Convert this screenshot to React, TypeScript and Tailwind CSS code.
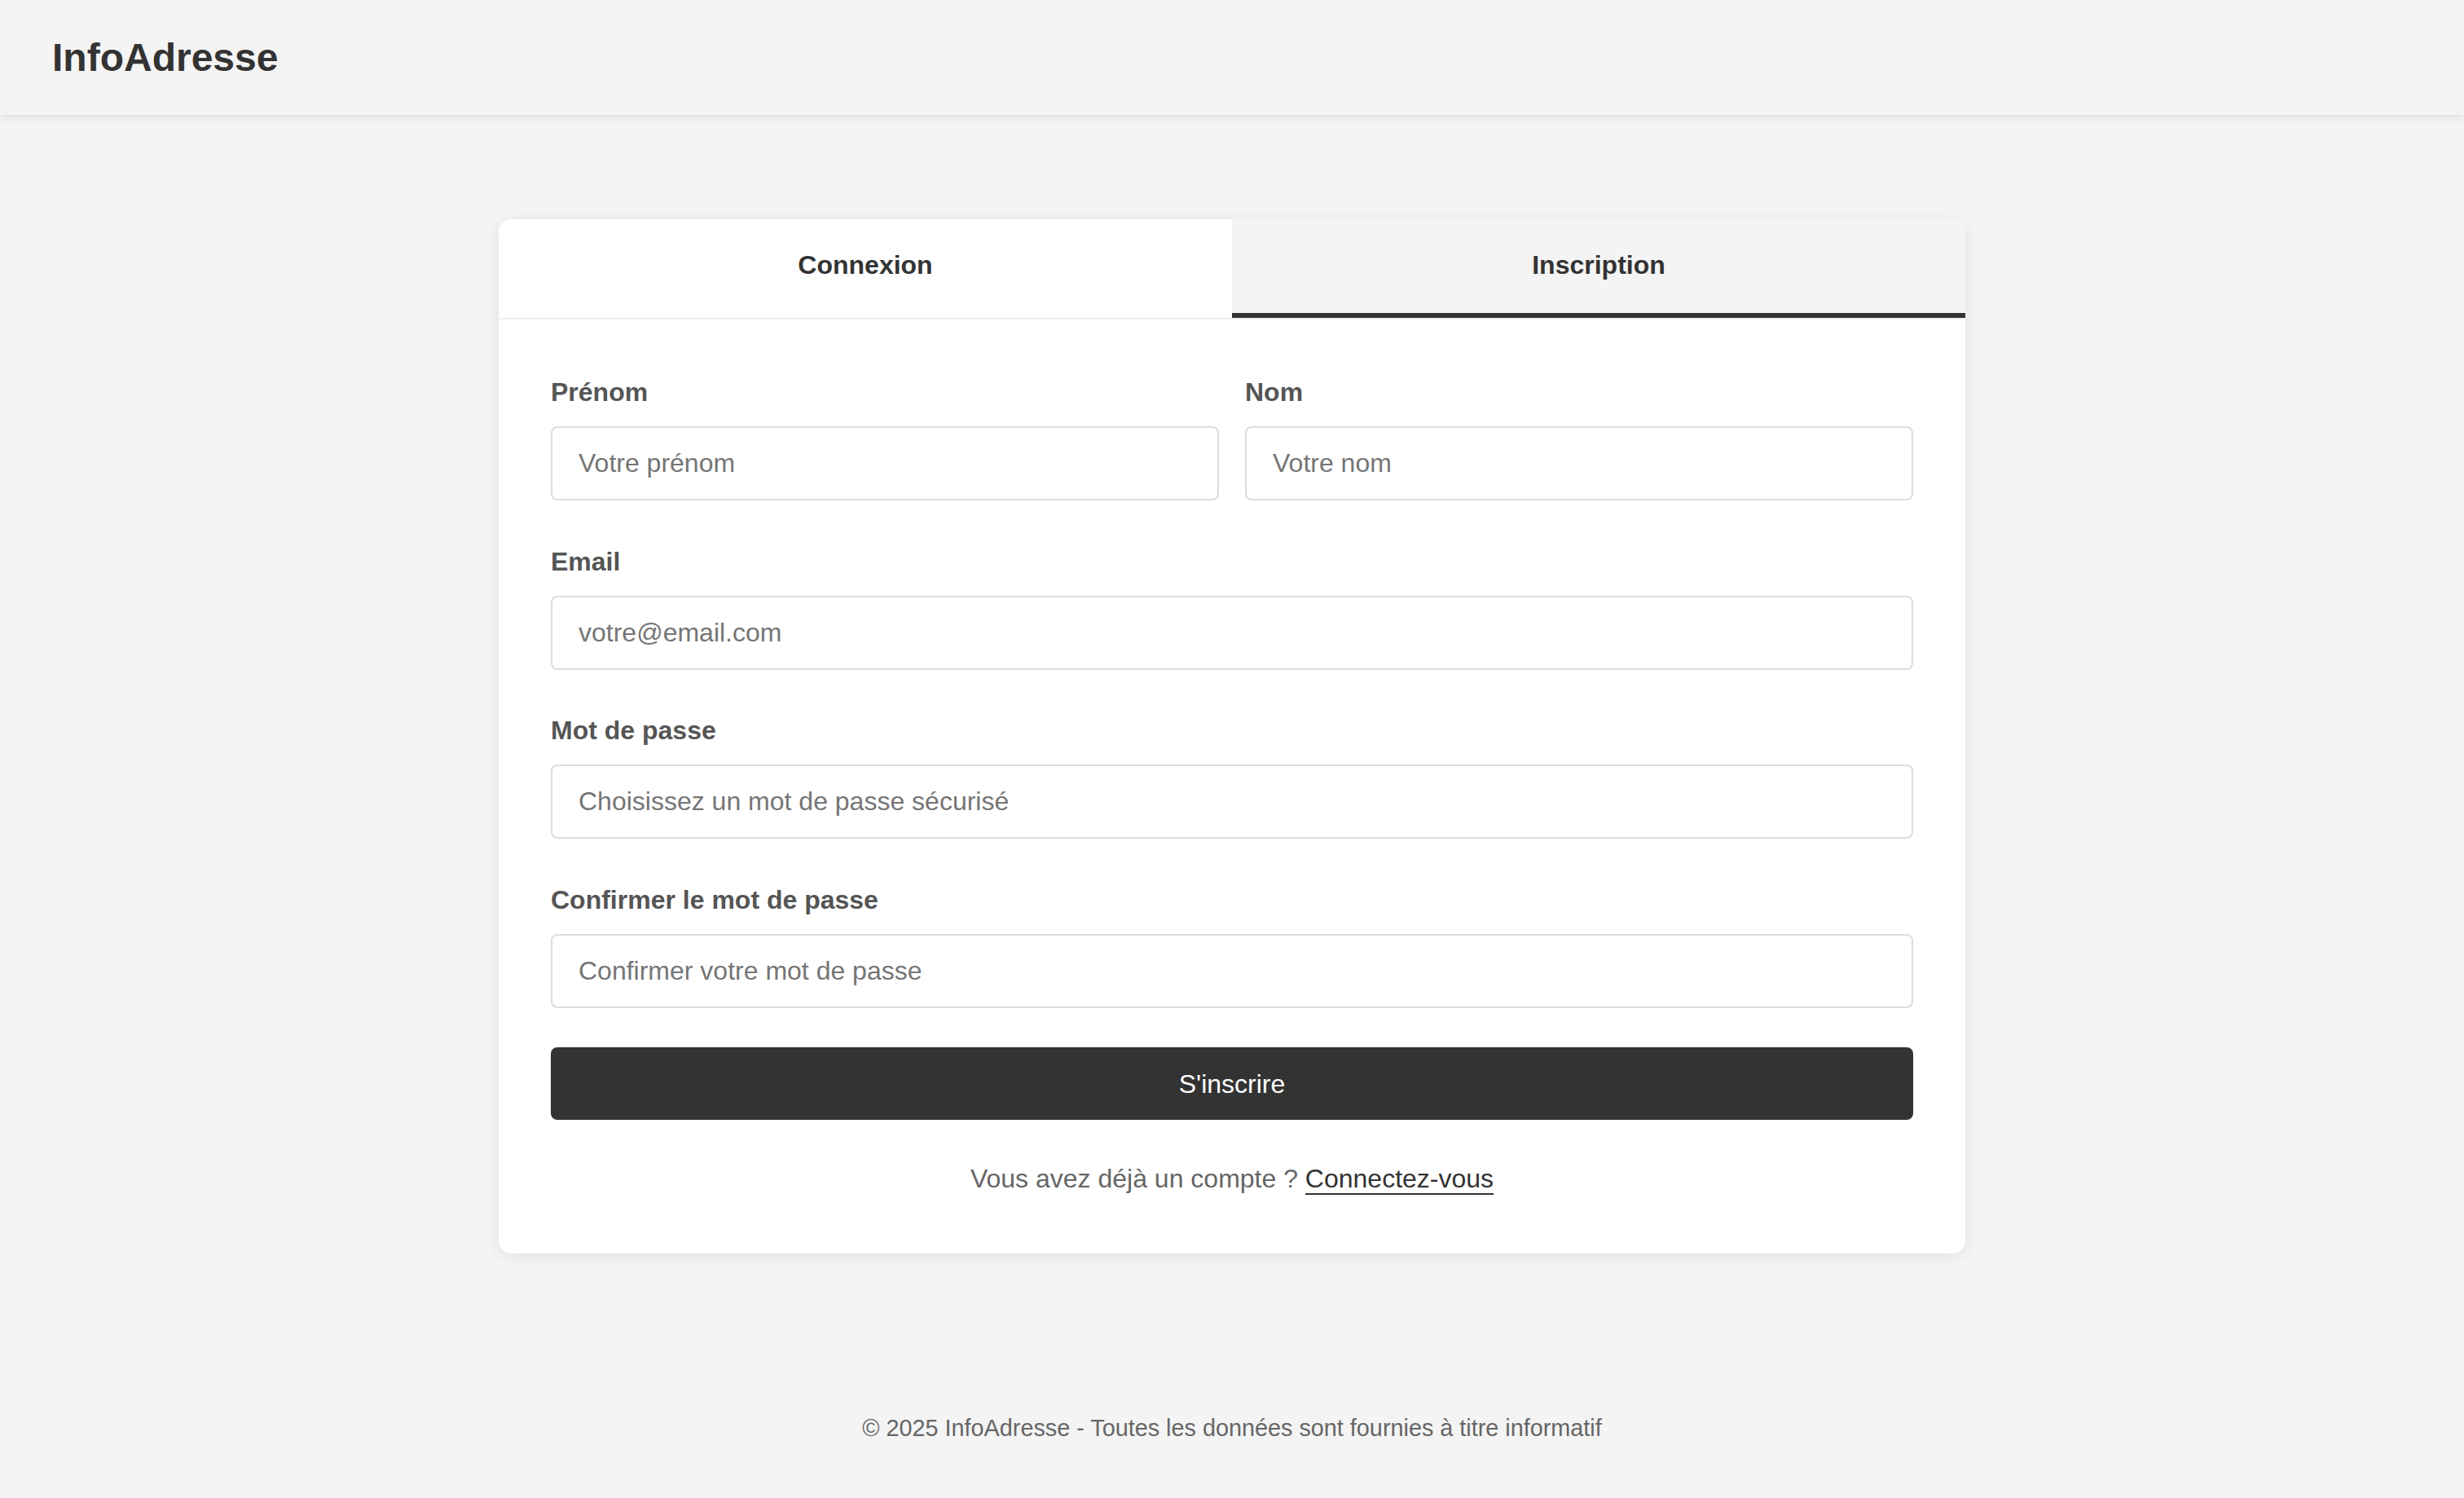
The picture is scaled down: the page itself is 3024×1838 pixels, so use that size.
export default function App() {
  return (
    <div className="min-h-screen flex flex-col bg-[#f4f4f4] text-[#333] font-['Liberation_Sans',Arial,sans-serif]">
      {/* Header */}
      <header className="h-[141px] px-[64px] flex items-center bg-[#f4f4f4] shadow-[0_4px_8px_rgba(0,0,0,0.08)]">
        <h1 className="text-[48px] font-bold leading-[55px] text-[#333]">InfoAdresse</h1>
      </header>

      {/* Card */}
      <main className="flex-1 pt-[128px]">
        <div className="w-[1800px] mx-auto bg-white rounded-[16px] overflow-hidden shadow-[0_4px_20px_rgba(0,0,0,0.08)]">
          <div className="flex border-b-2 border-[#eee]">
            <button className="flex-1 h-[121px] pb-[3px] flex items-center justify-center bg-white border-b-[6px] border-transparent text-[32px] font-bold text-[#333]">
              Connexion
            </button>
            <button className="flex-1 h-[121px] pb-[3px] flex items-center justify-center bg-[#f4f4f4] border-b-[6px] border-[#333] text-[32px] font-bold text-[#333]">
              Inscription
            </button>
          </div>

          <form className="px-[64px] pt-[71px] pb-[73px]">
            <div className="grid grid-cols-2 gap-x-[32px] mb-[57px]">
              <div>
                <label className="block text-[32px] leading-[37px] font-bold text-[#555] mb-[23px]">Prénom</label>
                <input
                  placeholder="Votre prénom"
                  className="w-full h-[91px] px-[32px] border-2 border-[#ddd] rounded-[8px] text-[32px] text-[#333] placeholder:text-[#757575] outline-none"
                />
              </div>
              <div>
                <label className="block text-[32px] leading-[37px] font-bold text-[#555] mb-[23px]">Nom</label>
                <input
                  placeholder="Votre nom"
                  className="w-full h-[91px] px-[32px] border-2 border-[#ddd] rounded-[8px] text-[32px] text-[#333] placeholder:text-[#757575] outline-none"
                />
              </div>
            </div>

            <div className="mb-[56px]">
              <label className="block text-[32px] leading-[37px] font-bold text-[#555] mb-[23px]">Email</label>
              <input
                placeholder="votre@email.com"
                className="w-full h-[91px] px-[32px] border-2 border-[#ddd] rounded-[8px] text-[32px] text-[#333] placeholder:text-[#757575] outline-none"
              />
            </div>

            <div className="mb-[57px]">
              <label className="block text-[32px] leading-[37px] font-bold text-[#555] mb-[23px]">Mot de passe</label>
              <input
                placeholder="Choisissez un mot de passe sécurisé"
                className="w-full h-[91px] px-[32px] border-2 border-[#ddd] rounded-[8px] text-[32px] text-[#333] placeholder:text-[#757575] outline-none"
              />
            </div>

            <div className="mb-[48px]">
              <label className="block text-[32px] leading-[37px] font-bold text-[#555] mb-[23px]">Confirmer le mot de passe</label>
              <input
                placeholder="Confirmer votre mot de passe"
                className="w-full h-[91px] px-[32px] border-2 border-[#ddd] rounded-[8px] text-[32px] text-[#333] placeholder:text-[#757575] outline-none"
              />
            </div>

            <button
              type="button"
              className="w-full h-[89px] bg-[#333] text-white text-[32px] rounded-[8px]"
            >
              S'inscrire
            </button>

            <p className="mt-[54px] text-center text-[32px] leading-[37px] text-[#666]">
              Vous avez déjà un compte ?{" "}
              <a href="#" className="text-[#333] border-b-2 border-[#333]">
                Connectez-vous
              </a>
            </p>
          </form>
        </div>
      </main>

      {/* Footer */}
      <footer className="py-[69px] text-center text-[28.8px] leading-[33px] text-[#666]">
        © 2025 InfoAdresse - Toutes les données sont fournies à titre informatif
      </footer>
    </div>
  );
}
